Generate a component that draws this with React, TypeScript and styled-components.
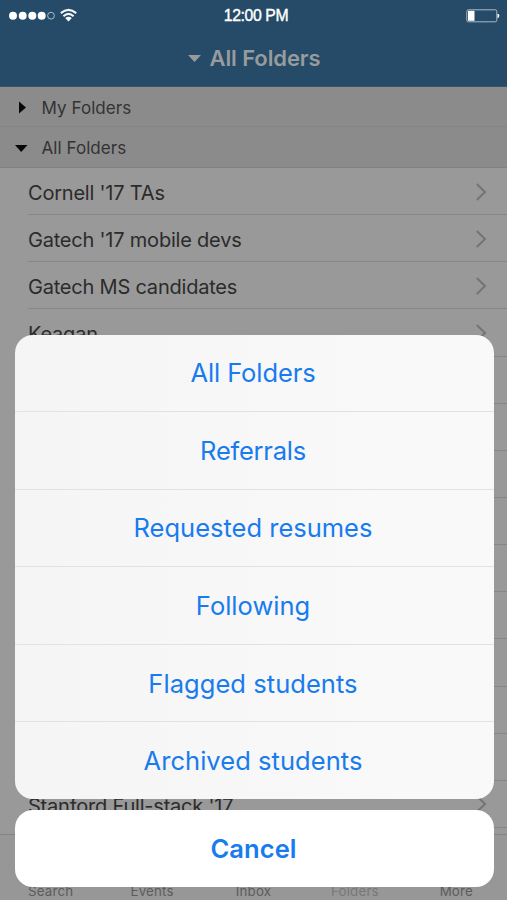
import React from "react";
import styled, { createGlobalStyle } from "styled-components";

const GlobalStyle = createGlobalStyle`
  * { box-sizing: border-box; }
  body { margin: 0; background: #999; font-family: Inter, "Liberation Sans", sans-serif; }
  button { font-family: inherit; border: 0; padding: 0; cursor: pointer; }
`;

const Screen = styled.div`
  position: relative;
  width: 507px;
  height: 900px;
  overflow: hidden;
  display: flex;
  flex-direction: column;
  background: #999;
`;

const Header = styled.header`
  height: 87px;
  flex: none;
  background: #254b68;
  border-bottom: 1px solid #35566f;
`;

const StatusBar = styled.div`
  display: grid;
  grid-template-columns: 1fr auto 1fr;
  align-items: center;
  height: 30px;
  padding: 0 7px 0 9px;
`;

const Clock = styled.time`
  color: #fff;
  font: 400 15.8px/32px "Liberation Sans", Arial, sans-serif;
  letter-spacing: -0.4px;
  padding-left: 3px;
  -webkit-text-stroke: 0.4px #fff;
`;

const Signal = styled.div`
  display: flex;
  align-items: center;
`;

const BatteryIcon = styled.svg`
  justify-self: end;
`;

const Title = styled.h1`
  display: flex;
  align-items: center;
  justify-content: center;
  gap: 9px;
  margin: 0;
  height: 56px;
  padding-left: 1px;
  color: #979b9d;
  font-size: 22px;
  font-weight: 600;
  letter-spacing: -0.1px;
`;

const SectionRow = styled.div<{ $open?: boolean }>`
  display: flex;
  align-items: center;
  flex: none;
  height: ${(p) => (p.$open ? 41 : 40)}px;
  padding: 2px 0 0 14px;
  gap: 12.6px;
  background: #8b8b8b;
  border-bottom: 1px solid ${(p) => (p.$open ? "#828282" : "#848484")};
  color: #333;
  font-size: 17px;
  letter-spacing: 0.05px;
`;

const List = styled.ul`
  list-style: none;
  margin: 0;
  padding: 0 0 0 28px;
  flex: none;
  height: 666px;
`;

const FolderRow = styled.li`
  display: flex;
  align-items: center;
  justify-content: space-between;
  height: 47.15px;
  padding: 3px 20px 0 0;
  border-bottom: 1px solid #868686;
  color: #2b2b2b;
  font-size: 20px;
  letter-spacing: -0.21px;
`;

const FolderName = styled.span`
  padding-top: 1px;
`;

const ChevronIcon = styled.svg`
  margin-bottom: 2px;
`;

const TabBar = styled.nav`
  display: grid;
  grid-template-columns: repeat(5, 1fr);
  align-items: end;
  flex: 1;
  border-top: 1px solid #848484;
  background: #979797;
`;

const Tab = styled.span<{ $active?: boolean }>`
  text-align: center;
  font-size: 13.3px;
  line-height: 18px;
  letter-spacing: 0.2px;
  color: ${(p) => (p.$active ? "#777" : "#5c5c5c")};
`;

const ActionSheet = styled.div`
  position: absolute;
  left: 14.5px;
  right: 13.5px;
  top: 334.5px;
  display: flex;
  flex-direction: column;
  gap: 11px;
`;

const ActionGroup = styled.div`
  display: flex;
  flex-direction: column;
  height: 464.5px;
  overflow: hidden;
  border-radius: 18px;
  background: linear-gradient(90deg, #f5f5f5, #f9f9f9 80%);
`;

const Action = styled.button<{ $tracking: number }>`
  flex: 1;
  background: transparent;
  color: #187bee;
  font-size: 25.5px;
  letter-spacing: ${(p) => p.$tracking}px;
  padding-right: 2px;

  & + & { border-top: 1px solid #e2e2e2; }
`;

const Cancel = styled.button`
  height: 76.5px;
  border-radius: 18px;
  background: #fff;
  color: #187bee;
  font-size: 25.5px;
  font-weight: 600;
  letter-spacing: 0.1px;
  padding-right: 1px;
`;

const folders = [
  "Cornell '17 TAs", "Gatech '17 mobile devs", "Gatech MS candidates", "Keagan",
  "", "", "", "", "", "", "", "", "", "Stanford Full-stack '17",
];

const actions: [string, number][] = [
  ["All Folders", -0.1], ["Referrals", -0.25], ["Requested resumes", 0],
  ["Following", 0], ["Flagged students", 0.05], ["Archived students", 0.05],
];

const Chevron = () => (
  <ChevronIcon width="12" height="18" viewBox="0 0 12 18">
    <path d="M1.8 1 L10 9 L1.8 17" fill="none" stroke="#747474" strokeWidth="2" />
  </ChevronIcon>
);

export default function App() {
  return (
    <Screen>
      <GlobalStyle />
      <Header>
        <StatusBar>
          <Signal>
            <svg width="70" height="16" viewBox="0 0 70 16">
              <g fill="#fff">
                <circle cx="4" cy="7.7" r="4" />
                <circle cx="13.7" cy="7.7" r="4" />
                <circle cx="23.3" cy="7.7" r="4" />
                <circle cx="32.7" cy="7.7" r="4" />
                <path d="M59.5 13.4 L56.2 10 Q59.5 7.5 62.8 10Z" />
              </g>
              <circle cx="42" cy="7.7" r="3.4" fill="none" stroke="#b8c8d4" strokeWidth="0.9" />
              <path d="M51.8 5.1 Q59.5 -1.5 67.2 5.1 M54.4 8.2 Q59.5 3.7 64.6 8.2" fill="none" stroke="#f2f7fa" strokeWidth="2.1" />
            </svg>
          </Signal>
          <Clock>12:00 PM</Clock>
          <BatteryIcon width="34" height="14" viewBox="0 0 34 14">
            <rect x="0.8" y="0.8" width="30" height="12" rx="1.5" fill="none" stroke="#a9bac6" />
            <rect x="2" y="1.8" width="6.5" height="10" fill="#fff" />
            <path d="M32 5 Q34 6.8 32 8.6Z" fill="#fff" stroke="#fff" />
          </BatteryIcon>
        </StatusBar>
        <Title>
          <svg width="13" height="7" viewBox="0 0 13 7"><path d="M0 0H13L6.5 7Z" fill="#979b9d" /></svg>
          All Folders
        </Title>
      </Header>
      <SectionRow>
        <svg width="15" height="14" viewBox="0 0 15 14"><path d="M5 0.5V12.5L12 6.5Z" fill="#080808" /></svg>
        My Folders
      </SectionRow>
      <SectionRow $open>
        <svg width="15" height="14" viewBox="0 0 15 14"><path d="M1 4H13.5L7.2 11Z" fill="#080808" /></svg>
        All Folders
      </SectionRow>
      <List>
        {folders.map((name, i) => (
          <FolderRow key={i}>
            <FolderName>{name}</FolderName>
            <Chevron />
          </FolderRow>
        ))}
      </List>
      <TabBar>
        {["Search", "Events", "Inbox", "Folders", "More"].map((t) => (
          <Tab key={t} $active={t === "Folders"}>{t}</Tab>
        ))}
      </TabBar>
      <ActionSheet>
        <ActionGroup>
          {actions.map(([label, tracking]) => (
            <Action key={label} $tracking={tracking}>{label}</Action>
          ))}
        </ActionGroup>
        <Cancel>Cancel</Cancel>
      </ActionSheet>
    </Screen>
  );
}
